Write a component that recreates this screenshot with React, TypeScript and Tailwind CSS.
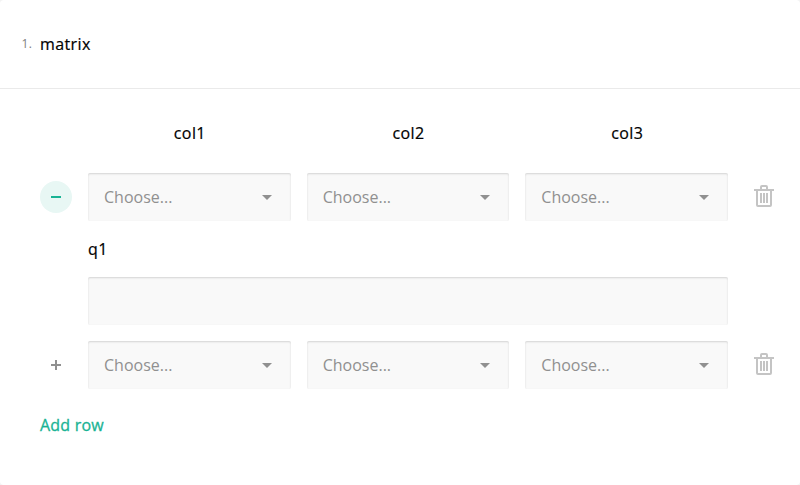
const columns = ['col1', 'col2', 'col3'];

const fieldShadow = 'shadow-[inset_0_1px_2px_rgba(0,0,0,0.15)]';

// Medium weight: the regular cut with a slightly thickened outline.
const medium = 'tracking-[0.4px] [-webkit-text-stroke:0.2px_currentColor]';

function Dropdown() {
  return (
    <button
      type="button"
      className={`flex h-12 min-w-0 flex-1 items-center justify-between rounded-[2px] bg-[#f9f9f9] pr-[18px] pl-4 text-[#909090] ${fieldShadow}`}
    >
      <span>Choose...</span>
      <svg width="12" height="6" viewBox="0 0 12 6" className="block">
        <path d="M1 1H11L6 6Z" fill="#909090" />
      </svg>
    </button>
  );
}

function TrashIcon() {
  return (
    <svg width="24" height="24" viewBox="0 0 24 24" fill="#c4c4c4" className="block">
      <path d="M22 4H16V2A2 2 0 0 0 14 0H10A2 2 0 0 0 8 2V4H2V6H4V20A2 2 0 0 0 6 22H18A2 2 0 0 0 20 20V6H22V4ZM10 2H14V4H10V2ZM18 20H6V6H18V20Z" fillRule="evenodd" />
      <path d="M8 8H10V18H8ZM11 8H13V18H11ZM14 8H16V18H14Z" />
    </svg>
  );
}

function MatrixRow({ expanded }: { expanded: boolean }) {
  return (
    <div className="flex h-12 items-center">
      <button
        type="button"
        aria-label={expanded ? 'Hide details' : 'Show details'}
        className={`mr-4 flex size-8 shrink-0 items-center justify-center rounded-full ${expanded ? 'bg-[#e8f7f4] text-[#19b394]' : 'text-[#909090]'}`}
      >
        <svg width="10" height="10" viewBox="0 0 10 10" fill="currentColor">
          <path d={expanded ? 'M0 4H10V6H0Z' : 'M0 4H4V0H6V4H10V6H6V10H4V6H0Z'} />
        </svg>
      </button>
      <div className="flex w-[640px] gap-4">
        {columns.map((column) => (
          <Dropdown key={column} />
        ))}
      </div>
      <button type="button" aria-label="Remove row" className="ml-6">
        <TrashIcon />
      </button>
    </div>
  );
}

export default function App() {
  return (
    <div className="h-[485px] w-[800px] bg-[#f3f3f3] font-['Open_Sans','Noto_Sans',sans-serif] text-base leading-6 text-black">
      <section className="h-full overflow-hidden rounded-[4px] bg-white">
        <header className="flex h-[89px] items-center border-b border-[#eaeaea] pl-[21.5px]">
          <span className="w-[18.5px] text-xs tracking-[0.4px] text-[#808080]">1.</span>
          <h1 className={medium}>matrix</h1>
        </header>
        <div className="pt-8 pl-10">
          <div className={`ml-12 flex w-[640px] gap-4 text-center ${medium}`}>
            {columns.map((column) => (
              <div key={column} className="flex-1 pl-px">{column}</div>
            ))}
          </div>
          <div className="mt-7">
            <MatrixRow expanded />
            <div className="mt-4 ml-12 w-[640px]">
              <label className={`block ${medium}`}>q1</label>
              <input className={`mt-4 block h-12 w-full rounded-[2px] bg-[#f9f9f9] ${fieldShadow}`} />
            </div>
            <div className="mt-4">
              <MatrixRow expanded={false} />
            </div>
          </div>
          <button type="button" className="mt-6 block tracking-[0.2px] text-[#19b394] [-webkit-text-stroke:0.3px_currentColor]">Add row</button>
        </div>
      </section>
    </div>
  );
}
